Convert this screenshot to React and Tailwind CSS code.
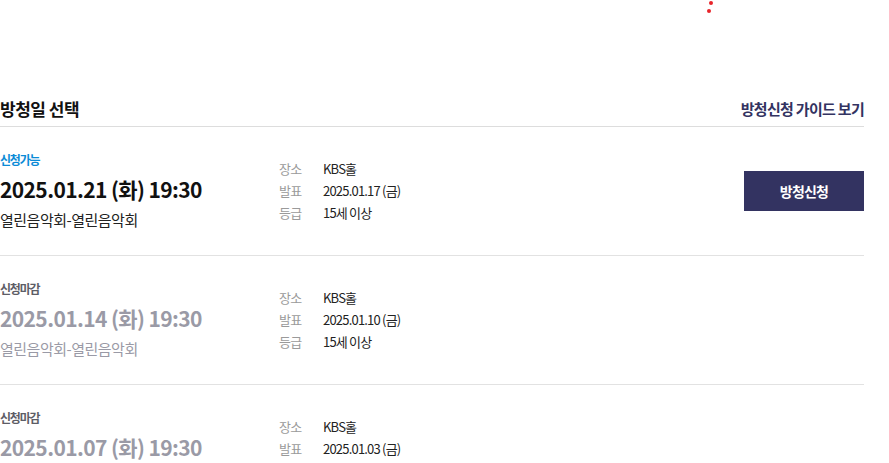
import React from "react";

const rows = [
  { open: true, date: "2025.01.21 (화) 19:30", ann: "2025.01.17 (금)" },
  { open: false, date: "2025.01.14 (화) 19:30", ann: "2025.01.10 (금)" },
  { open: false, date: "2025.01.07 (화) 19:30", ann: "2025.01.03 (금)" },
];

function Row({ r }) {
  return (
    <div className="flex h-[129px] shrink-0 border-b border-[#e2e2e2]">
      <div className="w-[279px] shrink-0 pt-[24px]">
        <div
          className={`h-[18px] text-[12px] font-bold leading-[18px] tracking-[-1.2px] ${
            r.open ? "text-[#0b8bd6]" : "text-[#5d5d66]"
          }`}
        >
          {r.open ? "신청가능" : "신청마감"}
        </div>
        <div
          className={`mt-[5px] h-[30px] text-[21px] font-bold leading-[30px] tracking-[-0.6px] ${
            r.open ? "text-[#111]" : "text-[#9a9aa6]"
          }`}
        >
          {r.date}
        </div>
        <div
          className={`mt-[5px] h-[22px] text-[15px] leading-[22px] tracking-[-0.5px] ${
            r.open ? "text-[#222]" : "text-[#9a9aa6]"
          }`}
        >
          열린음악회-열린음악회
        </div>
      </div>
      <div className="pt-[31px] text-[13px] leading-[22px]">
        {[
          ["장소", "KBS홀"],
          ["발표", r.ann],
          ["등급", "15세 이상"],
        ].map(([k, v]) => (
          <div key={k} className="flex h-[22px]">
            <span className="w-[44px] tracking-[-0.8px] text-[#9a9a9a]">{k}</span>
            <span className="tracking-[-0.8px] text-[#222]">{v}</span>
          </div>
        ))}
      </div>
      {r.open && (
        <div className="ml-auto pt-[44px]">
          <button className="flex h-[40px] w-[120px] items-center justify-center bg-[#333361] text-[14px] font-bold tracking-[-0.8px] text-white">
            방청신청
          </button>
        </div>
      )}
    </div>
  );
}

export default function App() {
  return (
    <div
      className="relative h-[463px] w-[889px] overflow-hidden bg-white"
      style={{ fontFamily: '"Noto Sans CJK KR", "Noto Sans", sans-serif' }}
    >
      <span className="absolute left-[709px] top-[1px] h-[4px] w-[4px] rounded-full bg-[#e8242a]" />
      <span className="absolute left-[707px] top-[9px] h-[4px] w-[4px] rounded-full bg-[#e8242a]" />
      <div className="flex w-[864px] flex-col">
        <div className="mt-[97px] flex items-end justify-between border-b border-[#dddddd] pb-[5px]">
          <h2 className="text-[17px] font-bold leading-[24px] tracking-[-0.5px] text-[#111]">
            방청일 선택
          </h2>
          <a className="text-[15px] font-bold leading-[24px] tracking-[-0.7px] text-[#333361]">
            방청신청 가이드 보기
          </a>
        </div>
        {rows.map((r) => (
          <Row key={r.date} r={r} />
        ))}
      </div>
    </div>
  );
}
